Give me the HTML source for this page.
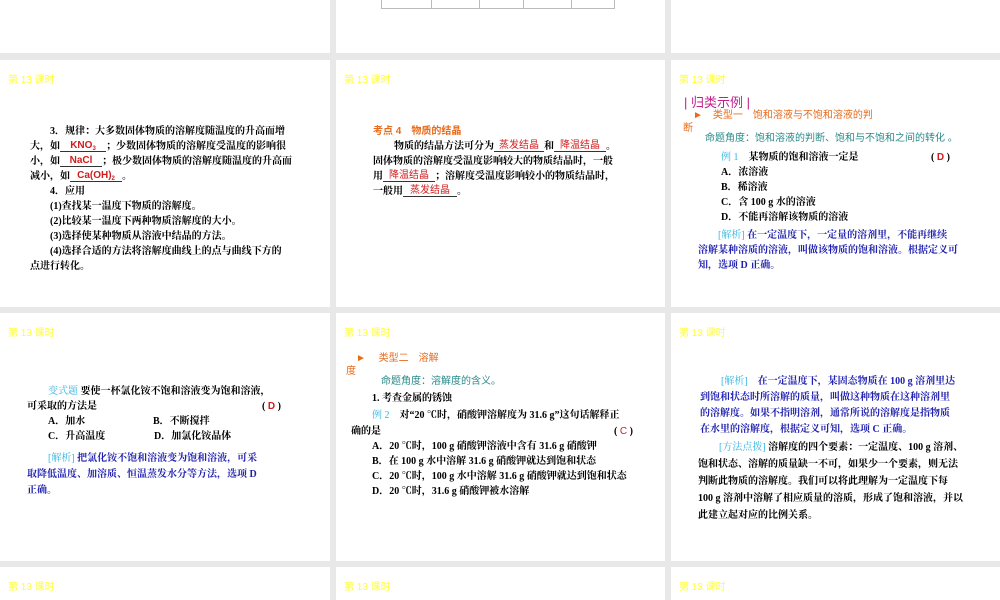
<!DOCTYPE html>
<html><head><meta charset="utf-8">
<style>
*{margin:0;padding:0;box-sizing:border-box}
body{width:1000px;height:600px;overflow:hidden;background:#e8e8e8;position:relative;font-family:"Liberation Serif","Noto Serif CJK SC",serif;}
.s{position:absolute;background:#fff;overflow:hidden}
.t{position:absolute;font-family:"Liberation Sans","Noto Sans CJK SC",sans-serif;font-size:10px;color:#ffff33;left:8px;top:11px}
.l{position:absolute;font-size:10px;line-height:12px;white-space:nowrap;color:#000;font-weight:bold}
.b{color:#2020b0}
.c{color:#33b5e0;font-weight:normal}
.r{color:#d01c1c;font-family:"Liberation Sans","Noto Sans CJK SC",sans-serif;font-weight:bold}
.o{color:#e86a1a;font-family:"Liberation Sans","Noto Sans CJK SC",sans-serif;font-weight:normal}
.g{color:#2a8a8a;font-family:"Liberation Sans","Noto Sans CJK SC",sans-serif;font-weight:normal}
u{text-decoration:none;border-bottom:1px solid #333;display:inline-block;text-align:center;line-height:10px;height:11px;vertical-align:top}
sub{font-size:6px;line-height:0;vertical-align:-2px}
</style></head><body>
<div class="s" style="left:0;top:0;width:330px;height:53px"></div>
<div class="s" style="left:336px;top:0;width:329px;height:53px">
 <div style="position:absolute;left:45px;top:-2px;width:234px;height:11px;border:1px solid #bbb;border-top:none"></div>
 <div style="position:absolute;left:95px;top:0;width:1px;height:9px;background:#bbb"></div>
 <div style="position:absolute;left:143px;top:0;width:1px;height:9px;background:#bbb"></div>
 <div style="position:absolute;left:187px;top:0;width:1px;height:9px;background:#bbb"></div>
 <div style="position:absolute;left:235px;top:0;width:1px;height:9px;background:#bbb"></div>
</div>
<div class="s" style="left:671px;top:0;width:329px;height:53px"></div>

<div class="s" style="left:0;top:60px;width:330px;height:247px">
 <div class="t">第 13 课时</div>
 <div class="l" style="left:50px;top:66px">3．规律：大多数固体物质的溶解度随温度的升高而增</div>
 <div class="l" style="left:30px;top:81px">大，如<u style="width:46px"><span class="r">KNO<sub>3</sub></span></u>；少数固体物质的溶解度受温度的影响很</div>
 <div class="l" style="left:30px;top:96px">小，如<u style="width:42px"><span class="r">NaCl</span></u>；极少数固体物质的溶解度随温度的升高而</div>
 <div class="l" style="left:30px;top:111px">减小，如<u style="width:52px"><span class="r">Ca(OH)<sub>2</sub></span></u>。</div>
 <div class="l" style="left:50px;top:126px">4．应用</div>
 <div class="l" style="left:50px;top:141px">(1)查找某一温度下物质的溶解度。</div>
 <div class="l" style="left:50px;top:156px">(2)比较某一温度下两种物质溶解度的大小。</div>
 <div class="l" style="left:50px;top:171px">(3)选择使某种物质从溶液中结晶的方法。</div>
 <div class="l" style="left:50px;top:186px">(4)选择合适的方法将溶解度曲线上的点与曲线下方的</div>
 <div class="l" style="left:30px;top:201px">点进行转化。</div>
</div>
<div class="s" style="left:336px;top:60px;width:329px;height:247px">
 <div class="t">第 13 课时</div>
 <div class="l o" style="left:37px;top:66px;font-weight:bold">考点 4　物质的结晶</div>
 <div class="l" style="left:58px;top:81px">物质的结晶方法可分为<u style="width:50px"><span class="r" style="font-weight:normal">蒸发结晶</span></u>和<u style="width:52px"><span class="r" style="font-weight:normal">降温结晶</span></u>。</div>
 <div class="l" style="left:37px;top:96px">固体物质的溶解度受温度影响较大的物质结晶时，一般</div>
 <div class="l" style="left:37px;top:111px">用<u style="width:52px"><span class="r" style="font-weight:normal">降温结晶</span></u>；溶解度受温度影响较小的物质结晶时，</div>
 <div class="l" style="left:37px;top:126px">一般用<u style="width:54px"><span class="r" style="font-weight:normal">蒸发结晶</span></u>。</div>
</div>
<div class="s" style="left:671px;top:60px;width:329px;height:247px">
 <div class="t">第 13 课时</div>
 <div class="l" style="left:13px;top:36px;font-size:13px;line-height:14px;font-weight:normal;color:#c0208a;font-family:'Liberation Sans','Noto Sans CJK SC',sans-serif">| 归类示例 |</div>
 <div class="l o" style="left:22px;top:50px">►　类型一　饱和溶液与不饱和溶液的判</div>
 <div class="l o" style="left:12px;top:63px">断</div>
 <div class="l g" style="left:34px;top:73px">命题角度：饱和溶液的判断、饱和与不饱和之间的转化 。</div>
 <div class="l" style="left:50px;top:92px"><span class="c">例 1</span>　某物质的饱和溶液一定是</div>
 <div class="l" style="left:260px;top:92px">( <span class="r">D</span> )</div>
 <div class="l" style="left:50px;top:107px">A．浓溶液</div>
 <div class="l" style="left:50px;top:122px">B．稀溶液</div>
 <div class="l" style="left:50px;top:137px">C．含 100 g 水的溶液</div>
 <div class="l" style="left:50px;top:152px">D．不能再溶解该物质的溶液</div>
 <div class="l b" style="left:47px;top:170px"><span class="c">[解析]</span> 在一定温度下，一定量的溶剂里，不能再继续</div>
 <div class="l b" style="left:27px;top:185px">溶解某种溶质的溶液，叫做该物质的饱和溶液。根据定义可</div>
 <div class="l b" style="left:27px;top:200px">知，选项 D 正确。</div>
</div>

<div class="s" style="left:0;top:313px;width:330px;height:248px">
 <div class="t">第 13 课时</div>
 <div class="l" style="left:48px;top:73px"><span class="c">变式题</span> 要使一杯氯化铵不饱和溶液变为饱和溶液，</div>
 <div class="l" style="left:27px;top:88px">可采取的方法是</div>
 <div class="l" style="left:262px;top:88px">( <span class="r">D</span> )</div>
 <div class="l" style="left:48px;top:103px">A．加水</div>
 <div class="l" style="left:153px;top:103px">B．不断搅拌</div>
 <div class="l" style="left:48px;top:118px">C．升高温度</div>
 <div class="l" style="left:154px;top:118px">D．加氯化铵晶体</div>
 <div class="l b" style="left:48px;top:140px"><span class="c">[解析]</span> 把氯化铵不饱和溶液变为饱和溶液，可采</div>
 <div class="l b" style="left:27px;top:156px">取降低温度、加溶质、恒温蒸发水分等方法，选项 D</div>
 <div class="l b" style="left:27px;top:172px">正确。</div>
</div>
<div class="s" style="left:336px;top:313px;width:329px;height:248px">
 <div class="t">第 13 课时</div>
 <div class="l o" style="left:20px;top:40px">►　 类型二　溶解</div>
 <div class="l o" style="left:10px;top:53px">度</div>
 <div class="l g" style="left:45px;top:63px">命题角度：溶解度的含义。</div>
 <div class="l" style="left:36px;top:80px">1. 考查金属的锈蚀</div>
 <div class="l" style="left:36px;top:97px"><span class="c">例 2</span>　对“20 ℃时，硝酸钾溶解度为 31.6 g”这句话解释正</div>
 <div class="l" style="left:15px;top:113px">确的是</div>
 <div class="l" style="left:278px;top:113px">( <span class="r" style="font-weight:normal">C</span> )</div>
 <div class="l" style="left:36px;top:128px">A．20 ℃时，100 g 硝酸钾溶液中含有 31.6 g 硝酸钾</div>
 <div class="l" style="left:36px;top:143px">B．在 100 g 水中溶解 31.6 g 硝酸钾就达到饱和状态</div>
 <div class="l" style="left:36px;top:158px">C．20 ℃时，100 g 水中溶解 31.6 g 硝酸钾就达到饱和状态</div>
 <div class="l" style="left:36px;top:173px">D．20 ℃时，31.6 g 硝酸钾被水溶解</div>
</div>
<div class="s" style="left:671px;top:313px;width:329px;height:248px">
 <div class="t">第 13 课时</div>
 <div class="l b" style="left:50px;top:63px"><span class="c">[解析]</span>　在一定温度下，某固态物质在 100 g 溶剂里达</div>
 <div class="l b" style="left:29px;top:79px">到饱和状态时所溶解的质量，叫做这种物质在这种溶剂里</div>
 <div class="l b" style="left:29px;top:95px">的溶解度。如果不指明溶剂，通常所说的溶解度是指物质</div>
 <div class="l b" style="left:29px;top:111px">在水里的溶解度，根据定义可知，选项 C 正确。</div>
 <div class="l" style="left:48px;top:129px"><span class="c">[方法点拨]</span> 溶解度的四个要素：一定温度、100 g 溶剂、</div>
 <div class="l" style="left:27px;top:146px">饱和状态、溶解的质量缺一不可，如果少一个要素，则无法</div>
 <div class="l" style="left:27px;top:163px">判断此物质的溶解度。我们可以将此理解为一定温度下每</div>
 <div class="l" style="left:27px;top:180px">100 g 溶剂中溶解了相应质量的溶质，形成了饱和溶液，并以</div>
 <div class="l" style="left:27px;top:197px">此建立起对应的比例关系。</div>
</div>

<div class="s" style="left:0;top:567px;width:330px;height:33px"><div class="t">第 13 课时</div></div>
<div class="s" style="left:336px;top:567px;width:329px;height:33px"><div class="t">第 13 课时</div></div>
<div class="s" style="left:671px;top:567px;width:329px;height:33px"><div class="t">第 13 课时</div></div>
</body></html>
